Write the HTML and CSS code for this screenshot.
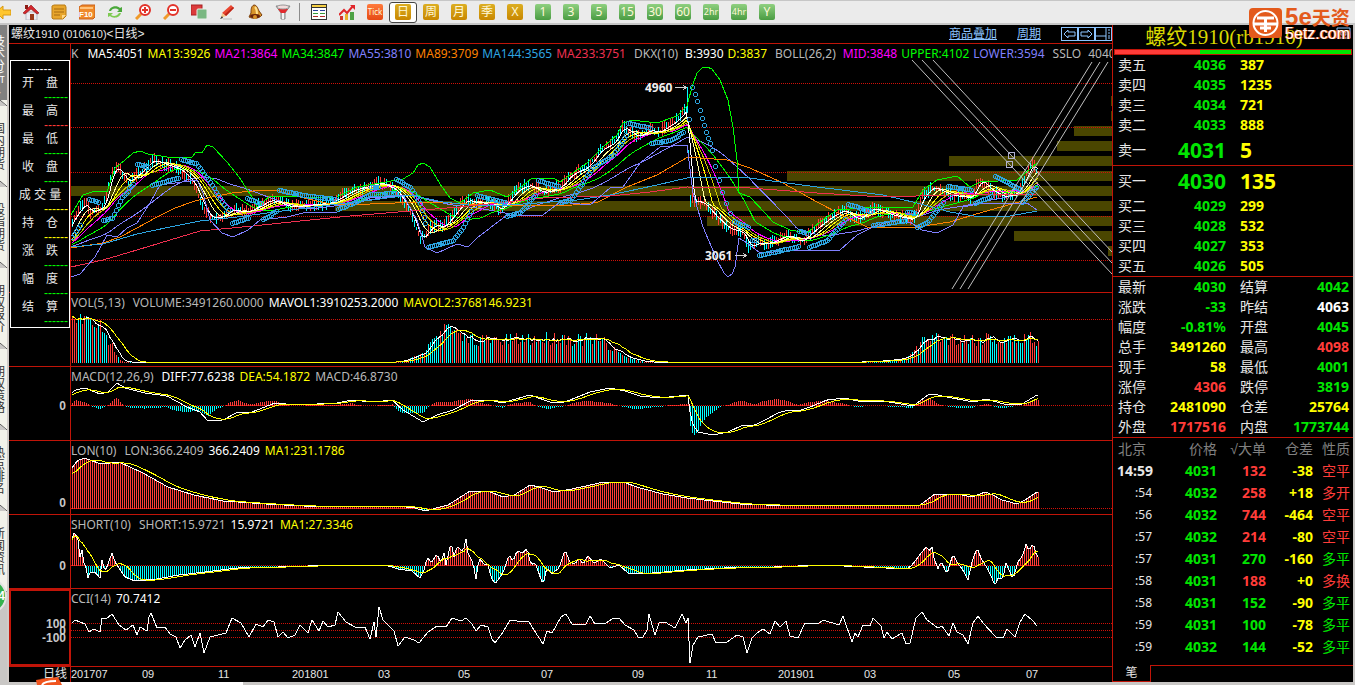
FILE: index.html
```html
<!DOCTYPE html>
<html lang="zh-CN">

<head>
  <meta charset="utf-8" />
  <meta name="viewport" content="width=device-width, initial-scale=1" />
  <title>螺纹1910 日线</title>
  <link rel="stylesheet" href="styles.css">
</head>

<body>
  <header class="toolbar">
    <button class="tool" aria-label="后退">
      <svg width="16" height="16" viewBox="0 0 16 16"><path d="M1 8l7-6v4h8v5H8v4z" fill="#ffc62e" stroke="#d99a10"/></svg>
    </button>
    <button class="tool" aria-label="首页">
      <svg width="16" height="16" viewBox="0 0 16 16"><path d="M3 8h11v8H3z" fill="#ececf2" stroke="#b9b9c4"/><path d="M2 1h3v4H2z" fill="#8c1c14"/><path d="M0 9l8-8 8 8-2 1-6-5-6 5z" fill="#d3262c" stroke="#8f1418" stroke-width=".6"/><path d="M7 10h4v6H7z" fill="#9a3a1a"/></svg>
    </button>
    <button class="tool" aria-label="自选">
      <svg width="16" height="16" viewBox="0 0 16 16"><path d="M1 2l2-1h11l1 2v9l-3 3H2l-1-1z" fill="#e8a62c" stroke="#b87a14"/><path d="M3 5h10M3 8h10M3 11h6" stroke="#a66a10"/><path d="M15 11l-4 4v-4z" fill="#ffd98a"/></svg>
    </button>
    <button class="tool" aria-label="F10">
      <svg width="16" height="16" viewBox="0 0 16 16"><path d="M0 3l3-2h13v12l-2 2H0z" fill="#ef8a2a" stroke="#c9601a"/><path d="M1 4h13" stroke="#ffc27a" stroke-width="2"/><text x="0" y="13" class="f10">F10</text></svg>
    </button>
    <button class="tool" aria-label="刷新">
      <svg width="16" height="16" viewBox="0 0 16 16"><path d="M2 7c1-5 8-6 11-3l2-1v5h-5l2-2C9 4 6 4 4 7z" fill="#4aa83a"/><path d="M14 9c-1 5-8 6-11 3l-2 1V9h5l-2 2c3 2 6 1 8-2z" fill="#7ecb52"/></svg>
    </button>
    <button class="tool" aria-label="放大">
      <svg width="16" height="16" viewBox="0 0 16 16"><path d="M1 15l5-5" stroke="#f09a2a" stroke-width="3"/><circle cx="10" cy="6" r="5" fill="#fff" stroke="#e2332a" stroke-width="2"/><path d="M7 6h6M10 3v6" stroke="#e2332a" stroke-width="2"/></svg>
    </button>
    <button class="tool" aria-label="缩小">
      <svg width="16" height="16" viewBox="0 0 16 16"><path d="M1 15l5-5" stroke="#f09a2a" stroke-width="3"/><circle cx="10" cy="6" r="5" fill="#fff" stroke="#e2332a" stroke-width="2"/><path d="M7 6h6" stroke="#e2332a" stroke-width="2"/></svg>
    </button>
    <button class="tool" aria-label="叠加">
      <svg width="16" height="16" viewBox="0 0 16 16"><rect width="11" height="10" y="1" fill="#dc3b3b" stroke="#a82222"/><rect x="6" y="5" width="10" height="10" rx="1" fill="#7ab882" stroke="#e8efe8"/></svg>
    </button>
    <button class="tool" aria-label="画线">
      <svg width="16" height="16" viewBox="0 0 16 16"><path d="M12 1l3 3-8 8-4-3z" fill="#ea4630"/><path d="M14 3l1 1-8 8-2-1z" fill="#b92317"/><path d="M3 9l4 3-5 2z" fill="#f5c98c"/><path d="M1 15l2-3 1 2z" fill="#333"/><path d="M4 15h9" stroke="#bbb"/></svg>
    </button>
    <button class="tool" aria-label="预警">
      <svg width="16" height="16" viewBox="0 0 16 16"><path d="M7 1c3 0 4 4 5 6l3 4c-3 4-9 4-13 2l2-4c0-3 0-7 3-8z" fill="#d8932a" stroke="#7a3e0c"/><path d="M8 3c2 2 2 5 2 7" stroke="#ffdf8a" stroke-width="2" fill="none"/><ellipse cx="8" cy="12" rx="5" ry="2" fill="#69230b"/><circle cx="8" cy="13" r="2" fill="#d8932a"/></svg>
    </button>
    <button class="tool" aria-label="筛选">
      <svg width="16" height="16" viewBox="0 0 16 16"><path d="M1 2h14l-5 7v6H6V9z" fill="#c9c9c9" stroke="#888"/><path d="M3 5h10l-3 4H6z" fill="#e22a2e"/><ellipse cx="8" cy="3" rx="6" ry="2" fill="#f2dcdc" stroke="#999"/><path d="M8 9v6" stroke="#f5f5f5" stroke-width="2"/></svg>
    </button>
    <span class="divider"></span>
    <button class="tool" aria-label="报价表">
      <svg width="16" height="16" viewBox="0 0 16 16" shape-rendering="crispEdges"><path d="M0 0h16v16H0z" fill="#333"/><path d="M1 4h14v11H1z" fill="#fff"/><path d="M1 1h14v2H1z" fill="#f5cf45"/><path d="M2 6h5M9 6h5" stroke="#283f9a"/><path d="M2 9h5M9 9h5" stroke="#3a9b3a"/><path d="M2 12h5M9 12h5" stroke="#b02a2a"/></svg>
    </button>
    <button class="tool" aria-label="走势图">
      <svg width="16" height="16" viewBox="0 0 16 16"><path d="M1 12h3v4H1z" fill="#d3362c"/><path d="M6 10h3v6H6z" fill="#e9b12f"/><path d="M11 8h4v8h-4z" fill="#4ea246"/><path d="M0 11l5-5 3 3 6-7" fill="none" stroke="#e0252a" stroke-width="2"/><path d="M11 1h5v5z" fill="#e0252a"/></svg>
    </button>
    <button class="tool tick"><span>Tick</span></button>
    <button class="tool gold active"><span>日</span></button>
    <button class="tool gold"><span>周</span></button>
    <button class="tool gold"><span>月</span></button>
    <button class="tool gold"><span>季</span></button>
    <button class="tool gold"><span>X</span></button>
    <button class="tool green"><span>1</span></button>
    <button class="tool green"><span>3</span></button>
    <button class="tool green"><span>5</span></button>
    <button class="tool green"><span>15</span></button>
    <button class="tool green"><span>30</span></button>
    <button class="tool green"><span>60</span></button>
    <button class="tool green narrow"><span>2hr</span></button>
    <button class="tool green narrow"><span>4hr</span></button>
    <button class="tool green"><span>Y</span></button>
  </header>

  <div class="workspace">
    <nav class="side">
      <button class="side-tab current"><span>技术分析↓</span></button>
      <button class="side-tab"><span>国内期货</span></button>
      <button class="side-tab"><span>股指期货</span></button>
      <button class="side-tab"><span>期权报价</span></button>
      <button class="side-tab"><span>期权策略</span></button>
      <button class="side-tab"><span>热点排名</span></button>
      <button class="side-tab"><span>新闻资讯</span></button>
      <i class="ball">4</i>
    </nav>

    <main class="chart">
      <div class="chart-title">
        <h1>螺纹<span class="code">1910 (010610)</span>&lt;日线&gt;</h1>
        <div class="chart-links">
          <a href="#overlay">商品叠加</a>
          <a href="#period">周期</a>
          <div class="nav-boxes">
            <button aria-label="左移"><svg width="15" height="12" viewBox="0 0 15 12"><path d="M2 6l4-4v2h7v4H6v2z"/></svg></button>
            <button aria-label="右移"><svg width="15" height="12" viewBox="0 0 15 12"><path d="M13 6L9 2v2H2v4h7v2z"/></svg></button>
            <button aria-label="布局"><svg width="15" height="12" viewBox="0 0 15 12"><path d="M0 8h10M10 0v12M12 2h2M12 5h2M12 8h2M12 10h2"/></svg></button>
          </div>
        </div>
      </div>

      <section class="pane">
        <div class="gutter"></div>
        <div class="plot">
          <p class="legend">
            <span class="c-gray name">K</span><span class="c-white">MA5:4051</span><span class="c-yellow">MA13:3926</span><span class="c-magenta">MA21:3864</span><span class="c-lime">MA34:3847</span><span class="c-violet">MA55:3810</span><span class="c-orange">MA89:3709</span><span class="c-sky">MA144:3565</span><span class="c-rose">MA233:3751</span>
            <span class="c-gray group">DKX(10)</span><span class="c-white">B:3930</span><span class="c-yellow">D:3837</span>
            <span class="c-gray group">BOLL(26,2)</span><span class="c-magenta">MID:3848</span><span class="c-lime">UPPER:4102</span><span class="c-violet">LOWER:3594</span>
            <span class="c-gray group">SSLO</span><span class="c-gray">4040</span>
          </p>
          <svg id="price" viewBox="71 44 1041 248" preserveAspectRatio="none"></svg>
        </div>
      </section>

      <section class="pane">
        <div class="gutter"></div>
        <div class="plot">
          <p class="legend wide"><span class="c-gray head">VOL(5,13)</span><span class="c-gray">VOLUME:3491260.0000</span><span class="c-white">MAVOL1:3910253.2000</span><span class="c-yellow">MAVOL2:3768146.9231</span></p>
          <svg id="vol" viewBox="71 293 1041 73" preserveAspectRatio="none"></svg>
        </div>
      </section>

      <section class="pane">
        <div class="gutter"><b class="mark mark-mid">0</b></div>
        <div class="plot">
          <p class="legend wide"><span class="c-gray head">MACD(12,26,9)</span><span class="c-white">DIFF:77.6238</span><span class="c-yellow">DEA:54.1872</span><span class="c-gray">MACD:46.8730</span></p>
          <svg id="macd" viewBox="71 367 1041 73" preserveAspectRatio="none"></svg>
        </div>
      </section>

      <section class="pane">
        <div class="gutter"><b class="mark mark-low">0</b></div>
        <div class="plot">
          <p class="legend wide"><span class="c-gray head">LON(10)</span><span class="c-gray">LON:366.2409</span><span class="c-white">366.2409</span><span class="c-yellow">MA1:231.1786</span></p>
          <svg id="lon" viewBox="71 441 1041 73" preserveAspectRatio="none"></svg>
        </div>
      </section>

      <section class="pane">
        <div class="gutter"><b class="mark mark-center">0</b></div>
        <div class="plot">
          <p class="legend wide"><span class="c-gray head">SHORT(10)</span><span class="c-gray">SHORT:15.9721</span><span class="c-white">15.9721</span><span class="c-yellow">MA1:27.3346</span></p>
          <svg id="short" viewBox="71 515 1041 73" preserveAspectRatio="none"></svg>
        </div>
      </section>

      <section class="pane">
        <div class="gutter selected"><b class="mark mark-p100">100</b><b class="mark mark-zero">0</b><b class="mark mark-m100">-100</b></div>
        <div class="plot">
          <p class="legend wide"><span class="c-gray">CCI(14)</span><span class="c-white">70.7412</span></p>
          <svg id="cci" viewBox="71 589 1041 77" preserveAspectRatio="none"></svg>
        </div>
      </section>

      <div class="dates">
        <div class="period">日线</div>
        <div class="date-row" id="dates"></div>
      </div>

      <dl class="floating">
        <dd class="c-white first">------</dd>
        <dt>开　盘</dt><dd class="c-lime">------</dd>
        <dt>最　高</dt><dd class="c-red">------</dd>
        <dt>最　低</dt><dd class="c-lime">------</dd>
        <dt>收　盘</dt><dd class="c-lime">------</dd>
        <dt>成 交 量</dt><dd class="c-yellow">------</dd>
        <dt>持　仓</dt><dd class="c-yellow">------</dd>
        <dt>涨　跌</dt><dd class="c-lime">------</dd>
        <dt>幅　度</dt><dd class="c-lime">------</dd>
        <dt>结　算</dt><dd class="c-lime">------</dd>
      </dl>
    </main>

    <aside class="quote">
      <h2>螺纹1910(rb1910)</h2>
      <div class="ratio"><span></span></div>

      <table class="book">
        <tbody>
          <tr><th>卖五</th><td class="c-green">4036</td><td>387</td></tr>
          <tr><th>卖四</th><td class="c-green">4035</td><td>1235</td></tr>
          <tr><th>卖三</th><td class="c-green">4034</td><td>721</td></tr>
          <tr><th>卖二</th><td class="c-green">4033</td><td>888</td></tr>
          <tr class="best"><th>卖一</th><td class="c-green">4031</td><td>5</td></tr>
        </tbody>
        <tbody>
          <tr class="best"><th>买一</th><td class="c-green">4030</td><td>135</td></tr>
          <tr><th>买二</th><td class="c-green">4029</td><td>299</td></tr>
          <tr><th>买三</th><td class="c-green">4028</td><td>532</td></tr>
          <tr><th>买四</th><td class="c-green">4027</td><td>353</td></tr>
          <tr><th>买五</th><td class="c-green">4026</td><td>505</td></tr>
        </tbody>
      </table>

      <table class="stats">
        <tr><th>最新</th><td class="c-green">4030</td><th>结算</th><td class="c-green">4042</td></tr>
        <tr><th>涨跌</th><td class="c-green">-33</td><th>昨结</th><td class="c-white">4063</td></tr>
        <tr><th>幅度</th><td class="c-green">-0.81%</td><th>开盘</th><td class="c-green">4045</td></tr>
        <tr><th>总手</th><td class="c-yellow">3491260</td><th>最高</th><td class="c-red">4098</td></tr>
        <tr><th>现手</th><td class="c-yellow">58</td><th>最低</th><td class="c-green">4001</td></tr>
        <tr><th>涨停</th><td class="c-red">4306</td><th>跌停</th><td class="c-green">3819</td></tr>
        <tr><th>持仓</th><td class="c-yellow">2481090</td><th>仓差</th><td class="c-yellow">25764</td></tr>
        <tr><th>外盘</th><td class="c-red">1717516</td><th>内盘</th><td class="c-green">1773744</td></tr>
      </table>

      <table class="trades">
        <thead>
          <tr><th>北京</th><th>价格</th><th>√大单</th><th>仓差</th><th>性质</th></tr>
        </thead>
        <tbody>
          <tr><td class="full">14:59</td><td class="c-green">4031</td><td class="c-red">132</td><td class="c-yellow">-38</td><td class="c-red">空平</td></tr>
          <tr><td>:54</td><td class="c-green">4032</td><td class="c-red">258</td><td class="c-yellow">+18</td><td class="c-red">多开</td></tr>
          <tr><td>:56</td><td class="c-green">4032</td><td class="c-red">744</td><td class="c-yellow">-464</td><td class="c-red">空平</td></tr>
          <tr><td>:57</td><td class="c-green">4032</td><td class="c-red">214</td><td class="c-yellow">-80</td><td class="c-red">空平</td></tr>
          <tr><td>:57</td><td class="c-green">4031</td><td class="c-green">270</td><td class="c-yellow">-160</td><td class="c-green">多平</td></tr>
          <tr><td>:58</td><td class="c-green">4031</td><td class="c-red">188</td><td class="c-yellow">+0</td><td class="c-red">多换</td></tr>
          <tr><td>:58</td><td class="c-green">4031</td><td class="c-green">152</td><td class="c-yellow">-90</td><td class="c-green">多平</td></tr>
          <tr><td>:59</td><td class="c-green">4031</td><td class="c-green">100</td><td class="c-yellow">-78</td><td class="c-green">多平</td></tr>
          <tr><td>:59</td><td class="c-green">4032</td><td class="c-green">144</td><td class="c-yellow">-52</td><td class="c-green">多平</td></tr>
        </tbody>
      </table>

      <div class="quote-tabs">
        <button class="quote-tab">笔</button>
        <span class="quote-line"></span>
      </div>

      <button class="restore" aria-label="还原"><svg width="15" height="12" viewBox="0 0 15 12"><path d="M1 1h13v10H1zM5 5h5v3H5z" fill="none" stroke="#8cc4ff"/></svg></button>
    </aside>
  </div>

  <footer class="bottom"><span class="scroll"></span></footer>

  <div class="brand">
    <svg width="33" height="30" viewBox="0 0 33 30"><rect width="33" height="30" rx="4" fill="#e35a1c"/><circle cx="16.500" cy="15" r="12" fill="none" stroke="#fff" stroke-width="2"/><path d="M8 10h17M5 16h23M16.500 10v14M11 20h11" fill="none" stroke="#fff" stroke-width="3"/></svg>
    <div class="brand-name">
      <strong><em>5e</em>天资</strong>
      <small>5etz.com</small>
    </div>
  </div>
  <svg class="ime" width="26" height="8" viewBox="0 0 26 8"><path d="M0 3q10-2 22-3l4 8H1z" fill="#f0541e"/><path d="M6 8q2-4 14-4" fill="none" stroke="#fff" stroke-width="2"/></svg>

  <script src="chart.js"></script>
</body>

</html>
```
FILE: styles.css
```css
html,
body {
  height: 100%;
  margin: 0;
  padding: 0;
  overflow: hidden;
  font-family: "Liberation Sans", "Noto Sans CJK SC", sans-serif;
  font-size: 12px;
}

body {
  display: flex;
  flex-direction: column;
  position: relative;
  background: #c9c7c5;
}

button {
  margin: 0;
  padding: 0;
  border: 0;
  background: none;
  font: inherit;
  color: inherit;
}

a {
  color: inherit;
}

/* colours */
.c-white { color: #fff; }
.c-gray { color: #b8b8b8; }
.c-yellow { color: #ff0; }
.c-magenta { color: #f0f; }
.c-lime { color: #0f0; }
.c-green { color: #00e600; }
.c-red { color: #ff3c39; }
.c-violet { color: #8080ff; }
.c-orange { color: #ff8000; }
.c-sky { color: #2da5e1; }
.c-rose { color: #ef3050; }

/* toolbar */
.toolbar {
  display: flex;
  flex: none;
  align-items: center;
  height: 25px;
  box-sizing: border-box;
  border-top: 1px solid #c6c6c6;
  border-bottom: 2px solid #c6c6c6;
  background: #ebebeb;
}

.tool {
  display: flex;
  flex: none;
  align-items: center;
  justify-content: center;
  width: 28px;
  height: 21px;
  box-sizing: border-box;
}

.tool:first-child {
  margin-left: -11px;
}

.tool span {
  width: 16px;
  height: 16px;
  border-radius: 2px;
  color: #fff8d8;
  font-family: "Noto Sans", "Noto Sans CJK SC", sans-serif;
  font-size: 12px;
  line-height: 16px;
  text-align: center;
}

.tool.gold span { background: linear-gradient(#dcae22, #c88700); }
.tool.green span { background: linear-gradient(#8fd080, #4a9c42); }

.tool.tick span {
  background: linear-gradient(#ff7a3c, #e64a14);
  font-size: 8px;
}

.tool.narrow span { font-size: 9px; }

.tool.active {
  border: 1px solid #444;
  border-radius: 3px;
  background: #fff;
}

.f10 {
  fill: #fff;
  font: bold 8px "Liberation Sans", sans-serif;
}

.divider {
  width: 1px;
  height: 18px;
  margin: 0 5px 0 2px;
  background: #8c8c8c;
}

/* layout */
.workspace {
  display: flex;
  flex: 1;
  min-height: 0;
}

.side {
  position: relative;
  width: 7px;
  flex: none;
  overflow: hidden;
  border-right: 2px solid #d0cbc8;
}

.side-tab {
  display: block;
  position: relative;
  width: 7px;
  height: 81px;
  overflow: hidden;
  background: #f2f2ea;
  color: #333;
}

.side-tab span {
  display: block;
  width: 12px;
  margin-left: -7px;
  line-height: 12px;
  word-break: break-all;
}

.side-tab::after {
  content: "";
  position: absolute;
  left: 0;
  bottom: 0;
  width: 7px;
  height: 6px;
  background: linear-gradient(to top right, #c9c7c5 44%, #555 50%, #f2f2ea 58%);
}

.side-tab.current {
  background: #808080;
  color: #fff;
}

.ball {
  position: absolute;
  left: -29px;
  top: 553px;
  width: 32px;
  height: 32px;
  border: 2px solid #e4e4e4;
  border-radius: 50%;
  background: #35b24d;
  color: #fff;
  font: bold 12px "Liberation Sans", sans-serif;
  line-height: 32px;
  text-align: right;
}

/* chart */
.chart {
  display: grid;
  position: relative;
  flex: 1;
  grid-template-rows: 19px minmax(0, 249fr) repeat(4, minmax(0, 74fr)) minmax(0, 78fr) 15px;
  min-width: 0;
  background: #000;
}

.chart-title {
  display: flex;
  align-items: center;
  justify-content: space-between;
  padding-left: 2px;
  border-bottom: 1px solid #c01408;
  color: #e6e6e6;
}

.chart-title h1 {
  margin: 0;
  font-size: 12px;
  font-weight: normal;
  line-height: 18px;
}

.chart-title .code {
  font-size: 11px;
}

.chart-links {
  display: flex;
  align-items: center;
  gap: 20px;
  color: #8cc4ff;
  line-height: 16px;
}

.nav-boxes {
  display: flex;
}

.nav-boxes button {
  width: 17px;
  height: 14px;
  box-sizing: border-box;
  border: 1px solid #8cc4ff;
}

.nav-boxes svg {
  display: block;
  fill: none;
  stroke: #8cc4ff;
}

.pane {
  display: grid;
  grid-template-columns: 62px minmax(0, 1fr);
  min-height: 0;
  border-bottom: 1px solid #c01408;
}

.gutter {
  position: relative;
  border-right: 1px solid #c01408;
  color: #c8c8c8;
}

.gutter.selected {
  border: 1px solid #c01408;
  outline: 1px solid #c01408;
  outline-offset: -2px;
}

.mark {
  position: absolute;
  right: 4px;
  font-size: 12px;
  line-height: 14px;
  transform: translateY(-50%);
}

.mark-mid { top: 54%; }
.mark-low { top: 85%; }
.mark-center { top: 70%; }
.mark-p100 { top: 45%; }
.mark-zero { top: 54%; }
.mark-m100 { top: 64%; }

.plot {
  position: relative;
  min-height: 0;
}

.plot svg {
  display: block;
  width: 100%;
  height: 100%;
}

.legend {
  display: flex;
  position: absolute;
  top: 1px;
  left: 0;
  right: 0;
  gap: 4px;
  margin: 0;
  overflow: hidden;
  font-family: "Noto Sans", sans-serif;
  font-size: 12px;
  line-height: 18px;
  white-space: nowrap;
}

.legend.wide { gap: 5px; }
.legend .name { margin-right: 5px; }
.legend .group { margin: 0 3px 0 4px; }
.legend .head { margin-right: 3px; }

.dates {
  display: grid;
  grid-template-columns: 62px minmax(0, 1fr);
  color: #e6e6e6;
  line-height: 15px;
}

.period {
  padding-right: 3px;
  border-right: 1px solid #c01408;
  text-align: right;
}

.date-row {
  position: relative;
  font-size: 11px;
}

.date-row span {
  position: absolute;
}

.floating {
  position: absolute;
  top: 35px;
  left: 1px;
  width: 60px;
  height: 268px;
  margin: 0;
  padding-top: 1px;
  box-sizing: border-box;
  border: 1px solid #fff;
  background: #000;
  color: #e6e6e6;
  line-height: 14px;
  text-align: center;
}

.floating dd {
  margin: 0;
  padding-right: 1px;
  text-align: right;
}

.floating dd.first {
  text-align: center;
}

/* chart drawing */
#price,
#vol,
#macd,
#lon,
#short,
#cci {
  fill: none;
  shape-rendering: crispEdges;
}

.grid { stroke: #d01008; stroke-dasharray: 1 1; }
.band { fill: #4a4600; }
.up { stroke: #ff3c39; }
.down { stroke: #0ff; }
.sar { stroke: #2da5e1; }
.ray { stroke: #c0c0c0; shape-rendering: auto; }
.handle { stroke: #b0b0d0; }
.price-text { fill: #f0f0f0; font: bold 12px "Noto Sans", sans-serif; }

/* quote */
.quote {
  display: flex;
  position: relative;
  flex: none;
  flex-direction: column;
  width: 241px;
  box-sizing: border-box;
  margin-right: 2px;
  border-left: 1px solid #c01408;
  background: #000;
  color: #e6e6e6;
}

.quote h2 {
  margin: 0;
  padding-right: 18px;
  color: #d8d800;
  font-family: "Liberation Serif", "Noto Sans CJK SC", serif;
  font-size: 21px;
  font-weight: normal;
  line-height: 24px;
  text-align: center;
}

.ratio {
  height: 4px;
  margin: 0 1px;
  border: 1px solid #c01408;
  background: #00e600;
}

.ratio span {
  display: block;
  width: 36%;
  height: 100%;
  background: #ff3c39;
}

.quote table {
  width: 100%;
  border-collapse: collapse;
  table-layout: fixed;
  font-size: 14px;
}

.quote th {
  padding: 0 0 0 5px;
  font-weight: normal;
  text-align: left;
}

.quote td {
  padding: 0;
  font-family: "Noto Sans", "Noto Sans CJK SC", sans-serif;
  font-weight: bold;
  text-align: right;
}

.book tr,
.stats tr {
  height: 20px;
  line-height: 20px;
}

.book tbody + tbody,
.stats,
.trades {
  border-top: 1px solid #c01408;
}

.book th,
.stats th:first-child { width: 35px; }

.book td:nth-child(2),
.stats td:nth-child(2) { width: 73px; }

.book td:nth-child(3) {
  padding-left: 14px;
  color: #ff0;
  text-align: left;
}

.book .best { height: 30px; }
.book .best td { font-size: 21px; }
.book tbody + tbody .best { height: 31px; }

.stats th:nth-child(3) {
  width: 35px;
  padding-left: 14px;
}

.stats td:nth-child(4) { padding-right: 4px; }

.trades tr {
  height: 22px;
  line-height: 22px;
}

.trades th {
  padding: 0;
  color: #808080;
  text-align: right;
}

.trades th:nth-child(1) { width: 40px; padding: 0 0 0 5px; box-sizing: border-box; text-align: left; }
.trades th:nth-child(2) { width: 64px; }
.trades th:nth-child(3) { width: 49px; }
.trades th:nth-child(4) { width: 47px; }
.trades th:nth-child(5),
.trades td:nth-child(5) { padding-right: 3px; }

.trades td:nth-child(1) {
  padding-right: 1px;
  font-size: 12px;
  font-weight: normal;
}

.trades td:nth-child(1).full {
  padding: 0;
  font-size: 14px;
  font-weight: bold;
}

.trades td:nth-child(5) { font-weight: normal; }

.quote-tabs {
  display: flex;
  margin-top: auto;
  height: 17px;
}

.quote-tab {
  width: 38px;
  box-sizing: border-box;
  border-right: 1px solid #c01408;
  border-bottom: 1px solid #c01408;
  font-size: 12px;
  line-height: 16px;
}

.quote-line {
  flex: 1;
  border-top: 1px solid #c01408;
}

.restore {
  position: absolute;
  top: 2px;
  right: 2px;
  width: 15px;
  height: 12px;
}

.restore svg { display: block; }

.bottom {
  flex: none;
  height: 3px;
  padding-left: 60px;
}

.scroll {
  display: block;
  width: 183px;
  height: 3px;
  background: #fff;
}

.brand {
  display: flex;
  position: absolute;
  top: 8px;
  right: 5px;
  gap: 3px;
}

.brand-name strong,
.brand-name small {
  display: block;
  color: #e35a1c;
  font-size: 19px;
  line-height: 17px;
  white-space: nowrap;
}

.brand-name em {
  font-size: 24px;
  font-style: normal;
}

.brand-name small {
  color: #fff;
  font-size: 16px;
  line-height: 14px;
  text-shadow: 1px 0 #e35a1c, -1px 0 #e35a1c;
}

.ime {
  position: absolute;
  left: 36px;
  bottom: 0;
}
```
FILE: chart.js
```js
const NS = 'http://www.w3.org/2000/svg';
const FIRST = 72;
const LAST = 1038;
const STEP = 2;

function parse(text) {
  return text.trim().split(/\s+/).map(p => p.split(',').map(Number));
}

function add(id, tag, attrs, text) {
  const el = document.createElementNS(NS, tag);
  for (const key in attrs) el.setAttribute(key, attrs[key]);
  if (text) el.textContent = text;
  document.getElementById(id).appendChild(el);
}

// one value per bar, straight lines between the given points
function sample(text, from = FIRST) {
  const pts = parse(text);
  const out = [];
  let k = 0;
  for (let x = from; x <= LAST; x += STEP) {
    while (k < pts.length - 2 && pts[k + 1][0] <= x) k++;
    const [x0, y0] = pts[k];
    const [x1, y1] = pts[k + 1];
    const t = Math.min(1, Math.max(0, (x - x0) / (x1 - x0)));
    out.push(y0 + (y1 - y0) * t);
  }
  return out;
}

function average(values, n) {
  return values.map((v, i) => {
    const part = values.slice(Math.max(0, i - n + 1), i + 1);
    return part.reduce((a, b) => a + b, 0) / part.length;
  });
}

function ema(values, n) {
  let last = values[0] + 2;
  return values.map(v => (last += (v - last) * 2 / (n + 1)));
}

function line(id, values, color) {
  const points = values.map((y, i) => `${FIRST + i * STEP},${y.toFixed(1)}`).join(' ');
  add(id, 'polyline', { points, stroke: color });
}

function trace(id, text, color) {
  add(id, 'polyline', { points: text.trim(), stroke: color });
}

function grid(id, ys) {
  ys.forEach(y => add(id, 'path', { d: `M71 ${y}.5H1112`, class: 'grid' }));
}

function sticks(id, values, base) {
  let up = '';
  let down = '';
  values.forEach((y, i) => {
    const d = `M${FIRST + i * STEP}.5 ${base}V${y.toFixed(1)}`;
    if (y <= base) up += d; else down += d;
  });
  add(id, 'path', { d: up, class: 'up' });
  add(id, 'path', { d: down, class: 'down' });
}

let seed = 7;
function rand() {
  seed = (seed * 16807) % 2147483647;
  return seed / 2147483647;
}

function dot(x, y) {
  add('price', 'circle', { cx: Math.round(x) + 0.5, cy: Math.round(y) + 0.5, r: 2, class: 'sar' });
}

// price
[[186, 71], [201, 335], [216, 707], [171, 787], [156, 949], [141, 1057], [126, 1074], [231, 1014], [246, 1108], [96, 1111], [111, 1111]]
  .forEach(([y, x]) => add('price', 'rect', { x, y, width: 1112 - x, height: 10, class: 'band' }));
grid('price', [83, 127, 172, 216, 260]);

const WARMUP = 60;
const closes = sample(`-60,250 60,247 70,223 80,208 85,203 90,213 103,207 112,170 118,168 127,183 140,172 152,160 158,162
  180,170 193,183 203,207 210,218 222,217 230,210 247,212 270,200 290,207 330,203 353,190 380,183 395,190 410,212
  420,240 433,225 443,227 465,200 477,203 490,203 500,210 517,190 528,185 543,193 560,187 570,175 587,167 600,150
  613,143 622,127 637,137 650,130 657,133 677,120 687,107 689,200 703,203 713,215 727,228 743,233 748,247 758,243
  770,243 787,235 800,242 817,227 830,217 843,210 857,220 873,208 890,215 913,220 922,197 932,187 950,195 970,198
  980,180 990,190 1003,197 1017,193 1025,177 1032,163 1037,173`, FIRST - WARMUP * STEP);

let red = 'M1032.500 157V166';
let cyan = 'M687.500 87V113';
closes.slice(WARMUP).forEach((y, i) => {
  const high = y - 1 - rand() * 7;
  const low = y + 1 + rand() * 6;
  const d = `M${FIRST + i * STEP}.5 ${high.toFixed(0)}V${low.toFixed(0)}`;
  if (rand() > 0.48) red += d; else cyan += d;
});
add('price', 'path', { d: red, class: 'up' });
add('price', 'path', { d: cyan, class: 'down' });

[[55, '#8080ff'], [34, '#00ff00'], [21, '#ff00ff'], [17, '#c8c800'], [13, '#ffff00'], [9, '#ffff9c'], [4, '#ffffff']]
  .forEach(([n, color]) => line('price', average(closes, n).slice(WARMUP), color));

trace('price', `71,248 103,243 120,237 137,228 157,217 175,208 195,201 212,197 232,193 253,191 275,190 300,197 330,204
  370,204 420,202 450,203 500,206 573,205 598,202 627,187 657,175 688,157 727,160 750,168 783,183 817,202 840,214
  867,227 917,227 950,222 983,212 1037,197`, '#ff8000');
trace('price', `71,247 103,244 137,234 170,227 200,221 237,217 290,210 330,205 380,199 410,195 443,202 477,206 510,205
  577,200 610,195 657,185 687,178 717,177 750,178 817,187 883,195 917,203 950,212 980,217 1010,216 1037,211`, '#2da5e1');
trace('price', `71,267 103,260 137,250 170,240 200,231 253,226 300,221 350,216 410,211 460,207 543,198 610,196 650,192
  687,187 750,188 817,193 883,197 950,195 1037,194`, '#ef3050');
trace('price', `71,215 83,195 95,191 107,192 115,168 125,160 133,153 140,151 148,154 167,157 192,157 196,152 202,153
  207,145 213,147 227,162 239,177 252,197 257,207 270,196 303,197 337,197 357,187 380,183 403,179 413,173 418,165
  423,163 430,167 440,184 450,198 460,203 473,193 490,190 507,197 517,190 532,178 553,178 560,182 570,175 587,163
  603,147 617,135 623,123 632,120 657,123 677,116 687,106 692,87 697,73 702,68 707,67 712,69 720,80 728,100 733,127
  737,160 739,193 750,197 765,213 773,222 790,230 807,233 820,222 837,210 877,207 913,207 923,190 937,180 957,176
  970,187 980,182 1017,180 1037,163`, '#00ff00');
trace('price', `71,277 80,274 95,257 107,235 117,237 127,228 137,223 150,203 160,185 197,180 203,193 210,220 222,233
  233,237 248,230 260,220 287,217 303,213 337,212 370,198 403,195 417,220 425,247 437,253 457,244 468,247 477,238
  507,215 543,215 560,202 590,205 610,188 623,187 640,163 660,147 687,145 693,193 703,227 717,260 724,273 728,277
  732,274 735,267 739,238 747,243 760,253 800,250 840,250 857,235 873,227 910,222 922,230 937,233 953,225 963,207
  983,203 1027,203 1037,210`, '#8080ff');

// parabolic SAR, each run is dotted every two pixels
[
  '72,237 82,222', '89,199 100,202', '103,220 112,218 122,197 135,182', '137,164 150,167', '152,185 180,177',
  '181,159 196,163 210,182 222,201 230,213', '232,223 250,217', '247,198 263,204', '263,219 278,210',
  '279,190 310,196 337,199', '338,209 355,202 370,194 397,193', '371,187 380,187', '396,179 410,187 420,203 427,230',
  '428,247 453,240 463,227 473,207', '477,195 507,203', '507,216 520,212 537,193', '538,180 560,187',
  '560,202 570,200 593,167 613,155 628,132', '628,123 652,128', '651,143 670,140 685,131', '734,221 750,228',
  '752,240 758,240', '759,255 800,246', '799,231 808,233', '809,247 827,240 847,217', '848,204 873,212',
  '873,225 907,220', '907,212 917,213', '917,227 927,222 945,200', '948,186 973,190', '975,203 993,195',
  '995,176 1022,190', '1022,202 1038,185'
].forEach(run => {
  const pts = parse(run);
  for (let k = 0; k < pts.length - 1; k++) {
    const [x0, y0] = pts[k];
    const [x1, y1] = pts[k + 1];
    const n = Math.max(1, Math.round((x1 - x0) / 2));
    for (let j = 0; j < n; j++) dot(x0 + (x1 - x0) * j / n, y0 + (y1 - y0) * j / n);
  }
});
parse('689,119 692,87 695,94 697,101 700,110 702,118 704,125 706,132 708,138 710,143 712,150 715,166 719,180 722,192 726,203 730,213')
  .forEach(([x, y]) => dot(x, y));

['M912 60L1112 274', 'M922 60L1112 263', 'M933 60L1112 252', 'M952 289L1092 62', 'M960 289L1100 62', 'M968 289L1108 62']
  .forEach(d => add('price', 'path', { d, class: 'ray' }));
add('price', 'path', { d: 'M1008.500 152.500h6v6h-6zM1006.500 161.500h6v6h-6z', class: 'handle' });

add('price', 'text', { x: 645, y: 92, class: 'price-text' }, '4960');
add('price', 'text', { x: 705, y: 260, class: 'price-text' }, '3061');
add('price', 'path', { d: 'M675 87.500H686M683 85L686 87.500L683 90M735 255.500H746M743 253L746 255.500L743 258', stroke: '#d0d0d0' });

// volume
grid('vol', [319]);
const volumes = sample(`72,320 86,319 93,325 99,322 102,337 110,340 112,348 116,355 121,361 126,363 395,362 405,360 415,356
  423,352 428,338 435,335 445,328 448,327 455,334 460,337 480,340 500,341 520,339 540,339 560,337 580,340 600,341
  612,347 625,357 645,362 860,362 880,361 900,359 908,356 920,344 930,337 980,340 990,336 1000,341 1020,339 1030,337
  1038,341`).map(y => y < 350 ? y + (rand() - 0.5) * 14 : Math.min(362, y));
let volUp = '';
let volDown = '';
volumes.forEach((y, i) => {
  const d = `M${FIRST + i * STEP}.5 363V${y.toFixed(0)}`;
  if (rand() > 0.5) volUp += d; else volDown += d;
});
add('vol', 'path', { d: volUp, class: 'up' });
add('vol', 'path', { d: volDown, class: 'down' });
line('vol', average(volumes, 5), '#ffffff');
line('vol', average(volumes, 13), '#ffff00');

// macd
grid('macd', [405]);
const diff = sample(`72,393 75,390 85,388 100,394 108,392 117,383 125,388 145,393 167,396 187,407 200,412 208,421 223,420
  238,412 252,412 275,403 297,405 337,403 352,400 373,402 392,400 403,410 423,422 437,415 453,410 472,400 490,400
  502,403 530,395 550,402 565,402 590,392 610,388 625,391 640,396 660,398 688,395 690,412 693,425 698,432 713,435
  728,432 743,425 755,425 765,420 778,413 788,410 798,411 810,407 827,400 845,398 857,401 883,401 913,406 928,395
  933,394 947,397 973,402 987,399 1003,404 1022,404 1037,395`);
const dea = ema(diff, 9);
sticks('macd', diff.map((v, i) => 405.5 + (v - dea[i]) * 1.6), 405.5);
line('macd', diff, '#ffffff');
line('macd', dea, '#ffff00');

// long
grid('lon', [508]);
const lon = sample(`72,468 77,461 84,458 101,464 119,462 143,473 168,487 194,495 223,501 266,504 303,506 397,506 415,508
  425,511 448,505 470,491 488,491 503,497 514,495 530,485 539,487 554,492 572,489 604,482 623,482 640,488 663,494
  687,498 713,501 740,504 767,505 920,505 935,494 957,494 972,497 985,492 993,495 1002,500 1017,504 1025,500 1037,492`);
sticks('lon', lon, 508.5);
line('lon', lon, '#ffffff');
line('lon', average([480, 478, 476, 474, 472, 470, 468].concat(lon), 10).slice(7), '#ffff00');

// short
grid('short', [565]);
const short = sample(`72,540 74,533 75,539 77,532 80,557 82,550 84,563 85,555 87,580 90,573 95,572 100,578 102,560 105,572
  112,553 115,562 125,577 135,581 157,579 179,575 205,572 237,568 277,567 339,565 390,566 397,569 412,571 420,578
  425,568 427,556 431,563 437,554 441,563 444,553 446,565 451,542 454,557 457,546 463,552 466,539 468,553 473,563
  476,579 479,558 484,564 488,565 491,577 495,584 503,573 509,555 513,561 517,551 523,553 527,548 531,565 535,562
  543,585 547,567 551,574 559,568 565,550 570,562 575,564 579,558 583,564 588,556 594,563 601,559 610,568 619,565
  628,573 640,574 687,570 723,568 773,567 823,565 907,569 912,565 922,552 927,546 929,552 932,547 934,558 938,569
  941,561 947,574 953,554 957,562 963,570 968,580 972,562 977,548 981,558 987,568 992,578 995,586 998,578 1003,578
  1006,563 1009,570 1013,579 1018,562 1023,555 1026,544 1029,551 1033,543 1037,557`);
sticks('short', short, 565.5);
line('short', short, '#ffffff');
line('short', average(short, 10), '#ffff00');

// cci
grid('cci', [623, 630, 637]);
trace('cci', `72,623 75,620 85,624 89,632 94,629 100,632 102,618 106,619 112,614 119,625 126,630 133,625 137,635 140,627
  147,631 149,617 151,613 157,628 165,627 170,634 176,637 180,648 185,640 191,635 195,647 200,633 204,653 210,637
  226,633 232,618 241,623 249,637 256,624 263,627 268,620 274,622 278,637 283,632 288,638 295,635 300,625 308,633
  312,620 319,631 323,621 328,627 335,625 338,612 346,622 355,627 365,627 370,639 374,622 376,637 379,607 383,620
  394,631 398,646 405,637 414,640 419,643 428,632 437,626 446,627 452,618 461,621 466,618 472,624 476,631 481,625
  488,627 492,639 495,643 503,632 510,620 517,621 529,622 534,630 543,644 547,631 552,633 561,617 566,614 572,624
  586,624 590,616 595,624 606,623 612,619 619,618 625,625 634,630 638,637 643,637 647,630 649,614 655,635 659,623
  665,622 675,628 682,614 686,623 688,618 690,663 693,645 698,637 712,634 716,643 727,642 737,635 743,637 747,653
  752,638 757,633 763,629 770,634 775,621 780,627 786,621 790,636 798,638 805,623 818,624 823,620 839,625 843,616
  852,642 855,633 858,637 863,625 870,626 873,618 881,626 884,638 887,632 892,639 902,633 906,644 910,643 916,618
  922,612 927,620 938,628 942,626 949,636 953,623 957,632 963,635 968,644 973,623 978,616 983,623 996,637 1003,638
  1007,629 1015,637 1020,622 1025,614 1033,621 1037,626`, '#ffffff');

// date axis
[[71, '201707'], [142, '09'], [218, '11'], [292, '201801'], [378, '03'], [458, '05'], [541, '07'], [632, '09'], [706, '11'], [778, '201901'], [864, '03'], [948, '05'], [1026, '07']]
  .forEach(([x, label]) => {
    const el = document.createElement('span');
    el.textContent = label;
    el.style.left = `${(x - 71) / 1041 * 100}%`;
    document.getElementById('dates').appendChild(el);
  });
```
